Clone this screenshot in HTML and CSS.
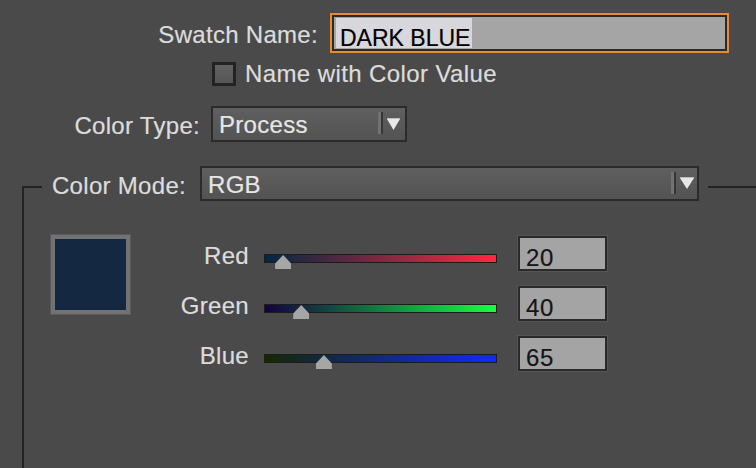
FILE: index.html
```html
<!DOCTYPE html>
<html>
<head>
<meta charset="utf-8">
<link rel="stylesheet" href="styles.css">
</head>
<body>
<div class="dialog">
  <div class="row row-name">
    <label class="lbl lbl-name">Swatch Name:</label>
    <div class="name-input"><div class="name-inner"><span class="sel">DARK BLUE</span></div></div>
  </div>
  <div class="row row-check">
    <span class="checkbox"></span>
    <span class="check-text">Name with Color Value</span>
  </div>
  <div class="row row-type">
    <label class="lbl lbl-type">Color Type:</label>
    <div class="select select-type">
      <span class="select-text">Process</span>
      <span class="sep"></span>
      <svg class="arrow" width="13" height="12" viewBox="0 0 13 12"><rect x="0" y="0" width="13" height="1" fill="#bdbdbd"/><polygon points="0,1 13,1 6.5,12" fill="#e8e8e8"/></svg>
    </div>
  </div>
  <div class="group">
    <div class="group-head">
      <label class="lbl lbl-mode">Color Mode:</label>
      <div class="select select-mode">
        <span class="select-text">RGB</span>
        <span class="sep"></span>
        <svg class="arrow" width="14" height="12" viewBox="0 0 14 12"><rect x="0" y="0" width="14" height="1" fill="#bdbdbd"/><polygon points="0,1 14,1 7,12" fill="#e8e8e8"/></svg>
      </div>
    </div>
    <div class="group-body">
      <div class="swatch"></div>
      <div class="channels">
        <div class="channel">
          <span class="ch-label">Red</span>
          <div class="track track-red"><span class="thumb" style="left: 7.84%"></span></div>
          <div class="num">20</div>
        </div>
        <div class="channel">
          <span class="ch-label">Green</span>
          <div class="track track-green"><span class="thumb" style="left: 15.69%"></span></div>
          <div class="num">40</div>
        </div>
        <div class="channel">
          <span class="ch-label">Blue</span>
          <div class="track track-blue"><span class="thumb" style="left: 25.49%"></span></div>
          <div class="num">65</div>
        </div>
      </div>
    </div>
  </div>
</div>
</body>
</html>
```
FILE: styles.css
```css
html, body {
  margin: 0;
  padding: 0;
}
body {
  background: #4a4a4a;
  width: 756px;
  height: 468px;
  overflow: hidden;
  font-family: "Liberation Sans", Arial, sans-serif;
  font-size: 24px;
  line-height: 28px;
  color: #dcdcdc;
  -webkit-text-stroke: 0.2px currentColor;
}
.dialog {
  padding-top: 13px;
  height: 455px;
  display: flex;
  flex-direction: column;
}
.row {
  display: flex;
  align-items: flex-start;
}
.lbl {
  text-align: right;
  letter-spacing: 0.3px;
  white-space: nowrap;
}
.row-name {
  height: 40px;
}
.lbl-name {
  width: 318px;
  margin-top: 8px;
}
.name-input {
  margin-left: 12px;
  width: 399px;
  height: 40px;
  box-sizing: border-box;
  border: 2px solid #ea8a30;
}
.name-inner {
  height: 100%;
  box-sizing: border-box;
  border: 2px solid #2a2a2a;
  background: #a5a5a5;
  padding-left: 2px;
}
.sel {
  display: inline-block;
  margin-top: 1px;
  height: 19px;
  padding: 11px 2px 0 4px;
  line-height: 19px;
  font-size: 23px;
  color: #000;
  background: #d8d8dc;
}
.row-check {
  margin-top: 9px;
  height: 24px;
  padding-left: 212px;
  align-items: center;
}
.checkbox {
  width: 24px;
  height: 24px;
  box-sizing: border-box;
  border: 3px solid #232323;
  background: linear-gradient(#616161, #565656);
}
.check-text {
  margin-left: 9px;
  letter-spacing: 0.4px;
  margin-top: -1px;
}
.row-type {
  margin-top: 20px;
  height: 36px;
}
.lbl-type {
  width: 200px;
  margin-top: 6px;
}
.select {
  box-sizing: border-box;
  border: 2px solid #2b2b2b;
  background: linear-gradient(#5f5f5f, #535353);
  display: flex;
  align-items: center;
  color: #e6e6e6;
}
.select-text {
  flex: 1;
  align-self: flex-start;
  padding-top: 3px;
  padding-left: 6px;
  letter-spacing: 0.3px;
}
.select-type {
  margin-left: 11px;
  width: 196px;
  height: 36px;
}
.sep {
  width: 5px;
  height: 22px;
  margin-top: -2px;
  background: linear-gradient(to right, #727272 0 3px, #363636 3px 5px);
}
.arrow {
  margin-left: 4px;
  margin-right: 5px;
  margin-top: -1px;
  display: block;
}
.select-mode .arrow {
  margin-right: 3px;
}
.group {
  margin-top: 44px;
  margin-left: 22px;
  flex: 1;
  border-top: 2px solid #232323;
  border-left: 2px solid #232323;
}
.group-head {
  margin-top: -22px;
  margin-left: 18px;
  width: fit-content;
  display: flex;
  align-items: flex-start;
  padding: 0 9px 0 6px;
  background: #4a4a4a;
}
.lbl-mode {
  width: 138px;
  margin-top: 6px;
}
.select-mode {
  margin-left: 14px;
  width: 499px;
  height: 35px;
}
.group-body {
  display: flex;
  align-items: flex-start;
  padding-left: 27px;
}
.swatch {
  margin-top: 34px;
  width: 79px;
  height: 79px;
  box-sizing: border-box;
  border: 4px solid #727272;
  box-shadow: 0 0 0 1px #5a5a5a;
  background: #142841;
}
.channels {
  margin-top: 35px;
  margin-left: 20px;
  display: flex;
  flex-direction: column;
  gap: 15px;
}
.channel {
  display: flex;
  align-items: flex-start;
  height: 35px;
}
.ch-label {
  width: 99px;
  text-align: right;
  margin-top: 6px;
  letter-spacing: 0.3px;
}
.track {
  position: relative;
  margin-left: 15px;
  margin-top: 18px;
  width: 233px;
  height: 9px;
  box-sizing: border-box;
  border: 1px solid #1c1c1c;
}
.track-red {
  background: linear-gradient(to right, rgb(0, 40, 65), rgb(255, 40, 65));
}
.track-green {
  background: linear-gradient(to right, rgb(20, 0, 65), rgb(20, 255, 65));
}
.track-blue {
  background: linear-gradient(to right, rgb(20, 40, 0), rgb(20, 40, 255));
}
.thumb {
  position: absolute;
  top: 0;
  width: 16px;
  height: 14px;
  margin-left: -8px;
  background: #a6a6a6;
  clip-path: polygon(50% 0, 100% 60%, 100% 100%, 0 100%, 0 60%);
}
.num {
  margin-left: 21px;
  width: 89px;
  height: 35px;
  box-sizing: border-box;
  border: 2px solid #2a2a2a;
  background: #a4a4a4;
  color: #151515;
  padding: 6px 0 0 6px;
  letter-spacing: 0.6px;
  box-shadow: 0 0 0 1px #555;
}
```
